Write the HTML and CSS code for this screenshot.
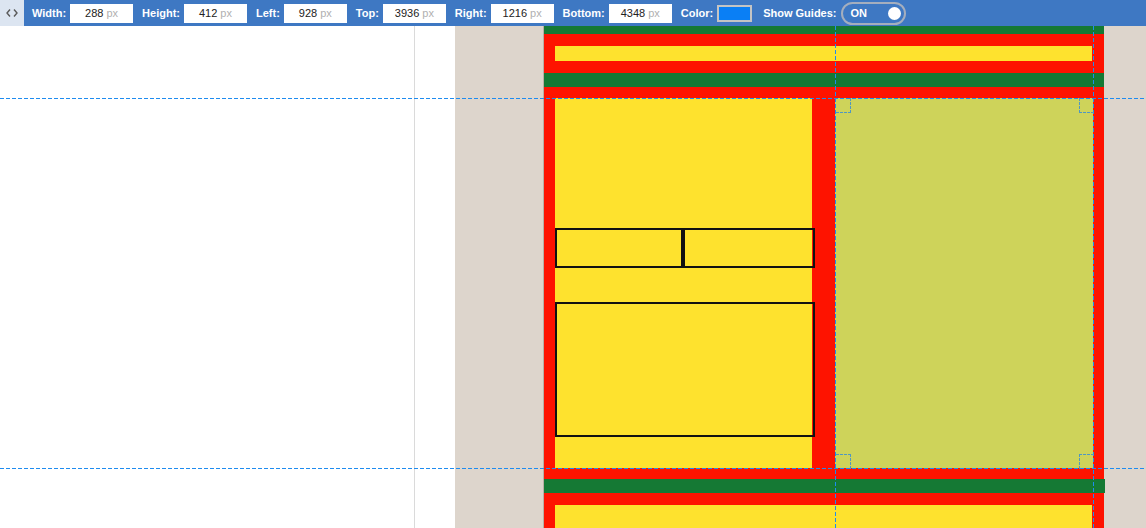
FILE: index.html
```html
<!DOCTYPE html>
<html>
<head>
<meta charset="utf-8">
<link rel="stylesheet" href="styles.css">
</head>
<body>
<div class="toolbar">
  <div class="toggle-code">
    <svg width="12" height="10" viewBox="0 0 12 10"><path d="M4 1.5 L1 5 L4 8.5 M8 1.5 L11 5 L8 8.5" fill="none" stroke="#5a5a5a" stroke-width="1.4"/></svg>
  </div>
  <label class="lbl first">Width:</label>
  <div class="field"><span class="val">288</span><span class="unit">px</span></div>
  <label class="lbl">Height:</label>
  <div class="field"><span class="val">412</span><span class="unit">px</span></div>
  <label class="lbl">Left:</label>
  <div class="field"><span class="val">928</span><span class="unit">px</span></div>
  <label class="lbl">Top:</label>
  <div class="field"><span class="val">3936</span><span class="unit">px</span></div>
  <label class="lbl">Right:</label>
  <div class="field"><span class="val">1216</span><span class="unit">px</span></div>
  <label class="lbl">Bottom:</label>
  <div class="field"><span class="val">4348</span><span class="unit">px</span></div>
  <label class="lbl">Color:</label>
  <div class="swatch"></div>
  <label class="lbl wide">Show Guides:</label>
  <div class="switch"><span class="switch-text">ON</span><span class="knob"></span></div>
</div>
<div class="workspace">
  <div class="sidebar"></div>
  <div class="gutter"></div>
  <div class="stage">
    <div class="page">
      <div class="band band-top"></div>
      <div class="section">
        <div class="bar"></div>
      </div>
      <div class="band"></div>
      <div class="section main">
        <div class="col-yellow">
          <div class="box-row">
            <div class="box box-a"></div>
            <div class="box box-b"></div>
          </div>
          <div class="box box-big"></div>
        </div>
        <div class="col-olive"></div>
      </div>
      <div class="band band-wide"></div>
      <div class="section">
        <div class="bar bar-tall"></div>
      </div>
    </div>
  </div>
</div>
<div class="guide guide-h guide-h1"></div>
<div class="guide guide-h guide-h2"></div>
<div class="guide guide-v guide-v1"></div>
<div class="guide guide-v guide-v2"></div>
<div class="corner corner-tl"></div>
<div class="corner corner-tr"></div>
<div class="corner corner-bl"></div>
<div class="corner corner-br"></div>
</body>
</html>
```
FILE: styles.css
```css
html, body {
  margin: 0;
  padding: 0;
  overflow: hidden;
  width: 1146px;
  height: 528px;
  font-family: "Liberation Sans", Arial, sans-serif;
}

body {
  position: relative;
}

.toolbar {
  height: 26px;
  background: #3e78c3;
  display: flex;
  align-items: center;
}

.toggle-code {
  width: 24px;
  height: 26px;
  background: #dce5f1;
  display: flex;
  align-items: center;
  justify-content: center;
}

.lbl {
  color: #fff;
  font-weight: bold;
  font-size: 11px;
  margin-left: 9px;
  margin-right: 4px;
}

.lbl.first {
  margin-left: 8px;
}

.lbl.wide {
  margin-left: 11px;
}

.field {
  width: 63px;
  height: 19px;
  background: #fff;
  display: flex;
  align-items: center;
  justify-content: center;
  font-size: 11px;
  gap: 3px;
}

.val {
  color: #222;
}

.unit {
  color: #b0b0b0;
}

.swatch {
  width: 31px;
  height: 13px;
  border: 2px solid #c4c4c4;
  background: #0a7ff5;
}

.switch {
  height: 19px;
  width: 50px;
  border: 2px solid #a4aebe;
  border-radius: 12px;
  display: flex;
  align-items: center;
  justify-content: space-between;
  padding: 0 3px 0 8px;
}

.switch-text {
  color: #fff;
  font-weight: bold;
  font-size: 11px;
}

.knob {
  width: 13px;
  height: 13px;
  border-radius: 50%;
  background: #fff;
}

.workspace {
  display: flex;
  height: 502px;
  overflow: hidden;
}

.sidebar {
  width: 414px;
  border-right: 1px solid #dadada;
  background: #fff;
  flex: none;
}

.gutter {
  width: 40px;
  background: #fff;
  flex: none;
}

.stage {
  flex: 1;
  background: #ddd5cc;
  padding-left: 88px;
}

.page {
  width: 561px;
  border-left: 1px solid #b8aea4;
  box-sizing: border-box;
}

.band {
  height: 14px;
  background: #157934;
}

.band-top {
  height: 8px;
}

.band-wide {
  margin-right: -1px;
}

.section {
  background: #fe1300;
  padding: 12px 12px 12px 11px;
}

.bar {
  height: 15px;
  background: #fee22e;
}

.bar-tall {
  height: 60px;
}

.section.main {
  padding: 11px 11px 11px 11px;
  display: grid;
  grid-template-columns: 257px 258px;
  column-gap: 23px;
  height: 370px;
}

.col-yellow {
  background: #fee22e;
  padding-top: 130px;
  display: flex;
  flex-direction: column;
  gap: 34px;
}

.col-olive {
  background: #ced35a;
}

.box-row {
  display: flex;
  width: 260px;
}

.box {
  border: 2px solid #111;
  box-sizing: border-box;
}

.box-a {
  width: 128px;
  height: 40px;
}

.box-b {
  width: 132px;
  height: 40px;
}

.box-big {
  width: 260px;
  height: 135px;
}

.guide {
  position: absolute;
}

.guide-h {
  left: 0;
  width: 1146px;
  height: 1px;
  background: repeating-linear-gradient(to right, #1e8cf0 0, #1e8cf0 4px, transparent 4px, transparent 6px);
}

.guide-h1 {
  top: 98px;
}

.guide-h2 {
  top: 468px;
}

.guide-v {
  top: 26px;
  height: 502px;
  width: 1px;
  background: repeating-linear-gradient(to bottom, #1e8cf0 0, #1e8cf0 4px, transparent 4px, transparent 6px);
}

.guide-v1 {
  left: 835px;
}

.guide-v2 {
  left: 1093px;
}

.corner {
  position: absolute;
  width: 15px;
  height: 15px;
  box-sizing: border-box;
}

.corner-tl {
  left: 836px;
  top: 98px;
  border-right: 1px dashed #4f97c2;
  border-bottom: 1px dashed #4f97c2;
}

.corner-tr {
  left: 1079px;
  top: 98px;
  border-left: 1px dashed #4f97c2;
  border-bottom: 1px dashed #4f97c2;
}

.corner-bl {
  left: 836px;
  top: 454px;
  border-right: 1px dashed #4f97c2;
  border-top: 1px dashed #4f97c2;
}

.corner-br {
  left: 1079px;
  top: 454px;
  border-left: 1px dashed #4f97c2;
  border-top: 1px dashed #4f97c2;
}
```
